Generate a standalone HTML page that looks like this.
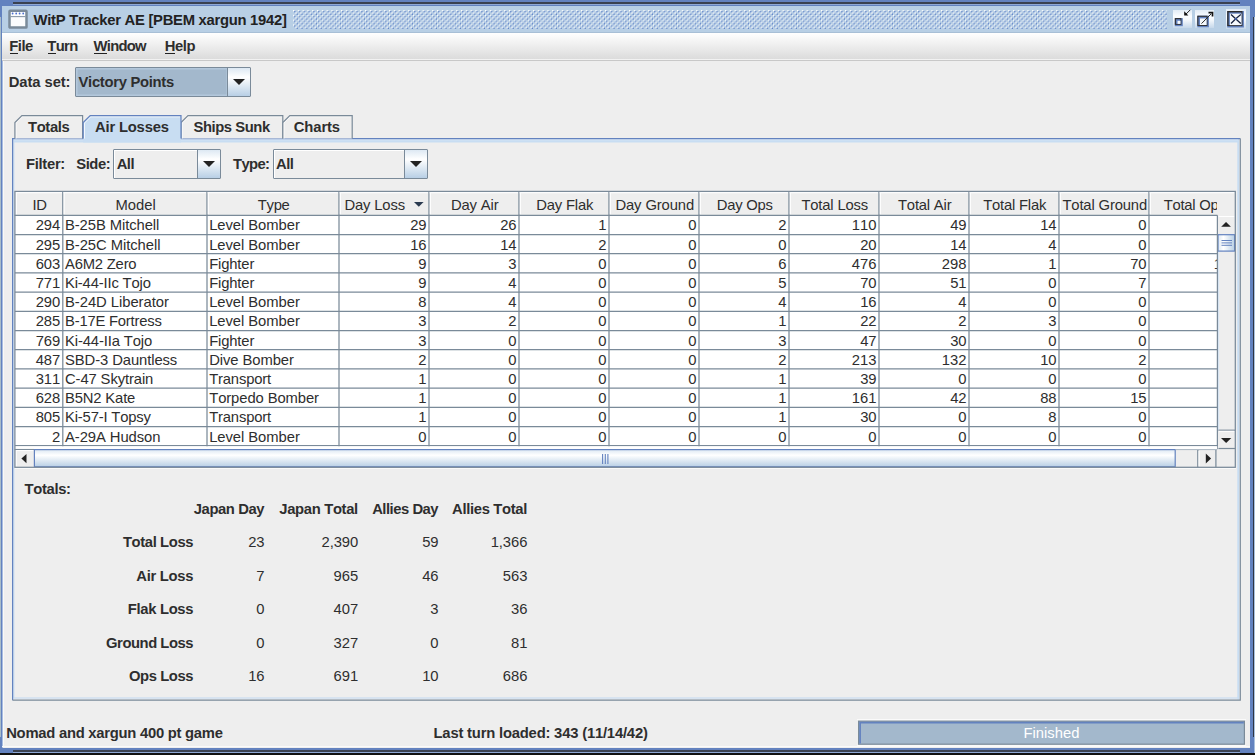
<!DOCTYPE html>
<html><head><meta charset="utf-8"><style>
html,body{margin:0;padding:0;width:1255px;height:755px;overflow:hidden;background:#6382bf}
.b{position:absolute;}
.t{position:absolute;font-family:"Liberation Sans",sans-serif;font-size:14.8px;line-height:16px;white-space:nowrap;font-kerning:none;}
</style></head><body>
<div class="b" style="left:0px;top:0px;width:1255px;height:755px;background:#6382bf"></div><div class="b" style="left:13px;top:2px;width:1227px;height:2px;background:#3a4150"></div><div class="b" style="left:13px;top:4px;width:1227px;height:1px;background:#8ea8d6"></div><div class="b" style="left:0px;top:17px;width:1px;height:720px;background:#a8bcc9"></div><div class="b" style="left:1253px;top:17px;width:1px;height:720px;background:#2f3542"></div><div class="b" style="left:1254px;top:17px;width:1px;height:738px;background:#a9c0de"></div><div class="b" style="left:13px;top:750px;width:1227px;height:2px;background:#3a4150"></div><div class="b" style="left:13px;top:752px;width:1227px;height:1px;background:#8ea8d6"></div><div class="b" style="left:0px;top:753px;width:1255px;height:2px;background:#111"></div><div class="b" style="left:2px;top:6px;width:1248px;height:27px;background:#b8cfe5"></div><div class="b" style="left:2px;top:32px;width:1248px;height:1px;background:#a8bfd6"></div><svg class="b" style="left:7px;top:8px" width="23" height="23"><rect x="2.5" y="2.8" width="17" height="16.7" rx="0.6" fill="#fbfcfd" stroke="#7a8a99" stroke-width="2.5"/><line x1="3.5" y1="8.6" x2="18.5" y2="8.6" stroke="#8a98a8" stroke-width="1.1"/><circle cx="5.60" cy="5.5" r="0.9" fill="#4a6fd0"/><circle cx="9.20" cy="5.5" r="0.9" fill="#4a6fd0"/><circle cx="12.60" cy="5.5" r="0.9" fill="#4a6fd0"/><circle cx="16.20" cy="5.5" r="0.9" fill="#4a6fd0"/></svg><div class="t" style="left:33.5px;top:12px;font-weight:bold;color:#222;letter-spacing:-0.271px;">WitP Tracker AE [PBEM xargun 1942]</div><svg class="b" style="left:292.6px;top:9.6px" width="874" height="19.2"><defs><pattern id="bp" width="4.8" height="4.8" patternUnits="userSpaceOnUse"><circle cx="0.6" cy="0.6" r="0.8" fill="#ffffff"/><circle cx="1.8" cy="1.8" r="0.75" fill="#5478c4"/><circle cx="3.0" cy="3.0" r="0.8" fill="#ffffff"/><circle cx="4.2" cy="4.2" r="0.75" fill="#5478c4"/></pattern></defs><rect width="874" height="19.2" fill="url(#bp)"/></svg><div class="b" style="left:1173px;top:10px;width:19px;height:18px;background:linear-gradient(#e2ecf6,#fbfdff 35%,#f4f8fc 55%,#c6d8ea)"></div><svg class="b" style="left:1174px;top:18px" width="9" height="9"><g transform="translate(0.80,0.10)"><rect x="0" y="0" width="8.00" height="8.10" fill="#6382bf"/><rect x="0" y="0" width="6.60" height="6.70" fill="#2c2c2c"/><rect x="1.1" y="1.1" width="4.60" height="4.70" fill="#6382bf"/><rect x="2.7" y="2.7" width="3.00" height="3.10" fill="#f6f9fc"/></g></svg><svg class="b" style="left:1183px;top:8px" width="9" height="9"><path d="M7.3 1.8 L2.8 6.3" stroke="#222" stroke-width="1" fill="none"/><path d="M1.2 3.3 V7.5 H5.4 Z" fill="#111"/></svg><div class="b" style="left:1195px;top:10px;width:19px;height:18px;background:linear-gradient(#e2ecf6,#fbfdff 35%,#f4f8fc 55%,#c6d8ea)"></div><svg class="b" style="left:1197px;top:15px" width="12" height="13"><g transform="translate(0.30,0.70)"><rect x="0" y="0" width="11.60" height="11.60" fill="#6382bf"/><rect x="0" y="0" width="10.20" height="10.20" fill="#2c2c2c"/><rect x="1.1" y="1.1" width="8.20" height="8.20" fill="#6382bf"/><rect x="2.7" y="2.7" width="6.60" height="6.60" fill="#f6f9fc"/></g></svg><svg class="b" style="left:1199px;top:10px" width="16" height="16"><path d="M2.5 13.6 L12 4" stroke="#2a2a2a" stroke-width="1" fill="none"/><path d="M9.5 2.6 H13.5 V6.6" stroke="#111" stroke-width="1.7" fill="none"/></svg><div class="b" style="left:1226px;top:9px;width:20px;height:20px;background:linear-gradient(#e2ecf6,#fbfdff 35%,#f4f8fc 55%,#c6d8ea)"></div><svg class="b" style="left:1227px;top:11px" width="17" height="17"><g transform="translate(0.20,0.00)"><rect x="0" y="0" width="16.70" height="16.50" fill="#6382bf"/><rect x="0" y="0" width="15.30" height="15.10" fill="#2c2c2c"/><rect x="1.4" y="1.4" width="12.90" height="12.70" fill="#6382bf"/><rect x="2.7" y="2.7" width="11.60" height="11.40" fill="#f6f9fc"/></g></svg><svg class="b" style="left:1227.2px;top:11px" width="17" height="17"><path d="M4 3.4 Q8.5 7.5 13.8 12.5 M13.8 3.4 Q8.5 7.5 4 12.5" stroke="#15203a" stroke-width="1.3" fill="none"/><circle cx="8.9" cy="7.9" r="0.9" fill="#4a6fd0"/></svg><div class="b" style="left:2px;top:33px;width:1248px;height:27px;background:linear-gradient(#ffffff,#f4f4f4 30%,#dcdcdc 95%)"></div><div class="b" style="left:2px;top:59px;width:1248px;height:1px;background:#f2f2f2"></div><div class="b" style="left:2px;top:60px;width:1248px;height:1px;background:#c8c8c8"></div><div class="b" style="left:2px;top:61px;width:1248px;height:687px;background:#eeeeee"></div><div class="b" style="left:2px;top:61px;width:1px;height:687px;background:#a8bce0"></div><div class="b" style="left:3px;top:61px;width:1px;height:686px;background:#f9f9f6"></div><div class="b" style="left:2px;top:746px;width:1248px;height:1px;background:#fafafa"></div><div class="t" style="left:9.3px;top:37.7px;font-weight:bold;color:#2e2e2e;letter-spacing:-0.524px;">File</div><div class="b" style="left:9.5px;top:53px;width:8px;height:1.2px;background:#222"></div><div class="t" style="left:47.2px;top:37.7px;font-weight:bold;color:#2e2e2e;letter-spacing:-0.570px;">Turn</div><div class="b" style="left:47.5px;top:53px;width:8px;height:1.2px;background:#222"></div><div class="t" style="left:93.6px;top:37.7px;font-weight:bold;color:#2e2e2e;letter-spacing:-0.752px;">Window</div><div class="b" style="left:93.8px;top:53px;width:13px;height:1.2px;background:#222"></div><div class="t" style="left:164.7px;top:37.7px;font-weight:bold;color:#2e2e2e;letter-spacing:-0.368px;">Help</div><div class="b" style="left:165px;top:53px;width:10px;height:1.2px;background:#222"></div><div class="t" style="left:8.7px;top:74px;font-weight:bold;color:#2e2e2e;letter-spacing:-0.079px;">Data set:</div><div class="b" style="left:75px;top:67px;width:176px;height:30px;border:1px solid #7a8a99;box-sizing:border-box;background:#eeeeee;border-radius:1px"></div><div class="b" style="left:76px;top:68px;width:152px;height:28px;background:#a3b8cc;box-shadow:inset 0 0 0 1.5px #b3c7db"></div><div class="b" style="left:227px;top:67px;width:1px;height:30px;background:#7a8a99"></div><div class="b" style="left:228px;top:68px;width:22px;height:28px;background:linear-gradient(#dde8f3,#ffffff 33%,#b8cfe5)"></div><svg class="b" style="left:233.0px;top:79.0px" width="12" height="6"><path d="M0 0 H12 L6 6 Z" fill="#222"/></svg><div class="t" style="left:78.5px;top:74.2px;font-weight:bold;color:#2e2e2e;letter-spacing:-0.294px;">Victory Points</div><svg class="b" style="left:0;top:0" width="1255" height="755"><rect x="13.8" y="139.2" width="1224.4" height="558.8" fill="none" stroke="#c8ddf2" stroke-width="1.2"/><rect x="13.6" y="139.2" width="1225" height="3.3" fill="#c8ddf2"/><line x1="1238.4" y1="139.2" x2="1238.4" y2="699.5" stroke="#c8ddf2" stroke-width="1.8"/><line x1="14" y1="139.7" x2="1238" y2="139.7" stroke="#e2edf8" stroke-width="1"/><polyline points="12.6,700.2 12.6,138.6 1240.3,138.6" fill="none" stroke="#6382bf" stroke-width="1.2"/><polyline points="12.6,700.2 1240.3,700.2 1240.3,138.6" fill="none" stroke="#7a8a99" stroke-width="1.2"/><polygon points="14.9,138.6 14.9,122.6 21.9,115.6 82.6,115.6 82.6,138.6" fill="#eeeeee"/><polyline points="16.1,138.6 16.1,123.1 22.4,116.8 81.8,116.8" fill="none" stroke="#ffffff" stroke-width="1" opacity="0.7"/><polyline points="14.9,138.6" fill="none"/><polyline points="14.9,138.6 14.9,122.6 21.9,115.6 82.6,115.6 82.6,138.6" fill="none" stroke="#7a8a99" stroke-width="1.2"/><polygon points="181,138.6 181,122.6 188,115.6 282.8,115.6 282.8,138.6" fill="#eeeeee"/><polyline points="182.2,138.6 182.2,123.1 188.5,116.8 282.0,116.8" fill="none" stroke="#ffffff" stroke-width="1" opacity="0.7"/><polyline points="181,138.6" fill="none"/><polyline points="181,138.6 181,122.6 188,115.6 282.8,115.6 282.8,138.6" fill="none" stroke="#7a8a99" stroke-width="1.2"/><polygon points="282.8,138.6 282.8,122.6 289.8,115.6 352.2,115.6 352.2,138.6" fill="#eeeeee"/><polyline points="284.0,138.6 284.0,123.1 290.3,116.8 351.4,116.8" fill="none" stroke="#ffffff" stroke-width="1" opacity="0.7"/><polyline points="282.8,138.6" fill="none"/><polyline points="282.8,138.6 282.8,122.6 289.8,115.6 352.2,115.6 352.2,138.6" fill="none" stroke="#7a8a99" stroke-width="1.2"/><polygon points="83.2,142.5 83.2,122.6 90.2,115.6 181,115.6 181,142.5" fill="#c8ddf2"/><polyline points="84.4,138.6 84.4,123.1 90.7,116.8 180.2,116.8" fill="none" stroke="#ffffff" stroke-width="1" opacity="0.9"/><polyline points="83.2,139" fill="none"/><polyline points="83.2,138.6 83.2,122.6 90.2,115.6 181,115.6 181,138.6" fill="none" stroke="#6382bf" stroke-width="1.2"/></svg><div class="t" style="left:28px;top:118.9px;font-weight:bold;color:#2e2e2e;letter-spacing:-0.364px;">Totals</div><div class="t" style="left:95px;top:118.9px;font-weight:bold;color:#2e2e2e;letter-spacing:-0.188px;">Air Losses</div><div class="t" style="left:193.5px;top:118.9px;font-weight:bold;color:#2e2e2e;letter-spacing:-0.439px;">Ships Sunk</div><div class="t" style="left:293.8px;top:118.9px;font-weight:bold;color:#2e2e2e;letter-spacing:-0.113px;">Charts</div><div class="t" style="left:26px;top:156px;font-weight:bold;color:#2e2e2e;letter-spacing:-0.302px;">Filter:</div><div class="t" style="left:76.2px;top:156px;font-weight:bold;color:#2e2e2e;letter-spacing:-0.397px;">Side:</div><div class="b" style="left:113.2px;top:149px;width:107.5px;height:29.5px;border:1px solid #7a8a99;box-sizing:border-box;background:#eeeeee;border-radius:1px"></div><div class="b" style="left:114.2px;top:150px;width:83.5px;height:27.5px;background:#eeeeee;box-shadow:inset 1px 1px 0 #ffffff"></div><div class="b" style="left:196.7px;top:149px;width:1px;height:29.5px;background:#7a8a99"></div><div class="b" style="left:197.7px;top:150px;width:22px;height:27.5px;background:linear-gradient(#dde8f3,#ffffff 33%,#b8cfe5)"></div><svg class="b" style="left:202.7px;top:160.75px" width="12" height="6"><path d="M0 0 H12 L6 6 Z" fill="#222"/></svg><div class="t" style="left:116.7px;top:155.95px;font-weight:bold;color:#2e2e2e;letter-spacing:-0.504px;">All</div><div class="t" style="left:233.1px;top:156px;font-weight:bold;color:#2e2e2e;letter-spacing:-0.634px;">Type:</div><div class="b" style="left:272.5px;top:149px;width:155.5px;height:29.5px;border:1px solid #7a8a99;box-sizing:border-box;background:#eeeeee;border-radius:1px"></div><div class="b" style="left:273.5px;top:150px;width:131.5px;height:27.5px;background:#eeeeee;box-shadow:inset 1px 1px 0 #ffffff"></div><div class="b" style="left:404.0px;top:149px;width:1px;height:29.5px;background:#7a8a99"></div><div class="b" style="left:405.0px;top:150px;width:22px;height:27.5px;background:linear-gradient(#dde8f3,#ffffff 33%,#b8cfe5)"></div><svg class="b" style="left:410.0px;top:160.75px" width="12" height="6"><path d="M0 0 H12 L6 6 Z" fill="#222"/></svg><div class="t" style="left:276.0px;top:155.95px;font-weight:bold;color:#2e2e2e;letter-spacing:-0.504px;">All</div><svg class="b" style="left:0;top:0" width="1255" height="755"><rect x="14.6" y="191.3" width="1220.8" height="276.2" fill="#eeeeee"/><line x1="15.6" y1="192.6" x2="62.199999999999996" y2="192.6" stroke="#ffffff" stroke-width="1.1"/><line x1="16.3" y1="192.6" x2="16.3" y2="214.6" stroke="#ffffff" stroke-width="1.1"/><line x1="62.8" y1="191.3" x2="62.8" y2="215.3" stroke="#7a8a99" stroke-width="1.3"/><line x1="63.4" y1="192.6" x2="206.4" y2="192.6" stroke="#ffffff" stroke-width="1.1"/><line x1="64.1" y1="192.6" x2="64.1" y2="214.6" stroke="#ffffff" stroke-width="1.1"/><line x1="207" y1="191.3" x2="207" y2="215.3" stroke="#7a8a99" stroke-width="1.3"/><line x1="207.6" y1="192.6" x2="338.4" y2="192.6" stroke="#ffffff" stroke-width="1.1"/><line x1="208.3" y1="192.6" x2="208.3" y2="214.6" stroke="#ffffff" stroke-width="1.1"/><line x1="339" y1="191.3" x2="339" y2="215.3" stroke="#7a8a99" stroke-width="1.3"/><line x1="339.6" y1="192.6" x2="428.4" y2="192.6" stroke="#ffffff" stroke-width="1.1"/><line x1="340.3" y1="192.6" x2="340.3" y2="214.6" stroke="#ffffff" stroke-width="1.1"/><line x1="429" y1="191.3" x2="429" y2="215.3" stroke="#7a8a99" stroke-width="1.3"/><line x1="429.6" y1="192.6" x2="518.4" y2="192.6" stroke="#ffffff" stroke-width="1.1"/><line x1="430.3" y1="192.6" x2="430.3" y2="214.6" stroke="#ffffff" stroke-width="1.1"/><line x1="519" y1="191.3" x2="519" y2="215.3" stroke="#7a8a99" stroke-width="1.3"/><line x1="519.6" y1="192.6" x2="608.4" y2="192.6" stroke="#ffffff" stroke-width="1.1"/><line x1="520.3" y1="192.6" x2="520.3" y2="214.6" stroke="#ffffff" stroke-width="1.1"/><line x1="609" y1="191.3" x2="609" y2="215.3" stroke="#7a8a99" stroke-width="1.3"/><line x1="609.6" y1="192.6" x2="698.4" y2="192.6" stroke="#ffffff" stroke-width="1.1"/><line x1="610.3" y1="192.6" x2="610.3" y2="214.6" stroke="#ffffff" stroke-width="1.1"/><line x1="699" y1="191.3" x2="699" y2="215.3" stroke="#7a8a99" stroke-width="1.3"/><line x1="699.6" y1="192.6" x2="788.4" y2="192.6" stroke="#ffffff" stroke-width="1.1"/><line x1="700.3" y1="192.6" x2="700.3" y2="214.6" stroke="#ffffff" stroke-width="1.1"/><line x1="789" y1="191.3" x2="789" y2="215.3" stroke="#7a8a99" stroke-width="1.3"/><line x1="789.6" y1="192.6" x2="878.4" y2="192.6" stroke="#ffffff" stroke-width="1.1"/><line x1="790.3" y1="192.6" x2="790.3" y2="214.6" stroke="#ffffff" stroke-width="1.1"/><line x1="879" y1="191.3" x2="879" y2="215.3" stroke="#7a8a99" stroke-width="1.3"/><line x1="879.6" y1="192.6" x2="968.4" y2="192.6" stroke="#ffffff" stroke-width="1.1"/><line x1="880.3" y1="192.6" x2="880.3" y2="214.6" stroke="#ffffff" stroke-width="1.1"/><line x1="969" y1="191.3" x2="969" y2="215.3" stroke="#7a8a99" stroke-width="1.3"/><line x1="969.6" y1="192.6" x2="1058.4" y2="192.6" stroke="#ffffff" stroke-width="1.1"/><line x1="970.3" y1="192.6" x2="970.3" y2="214.6" stroke="#ffffff" stroke-width="1.1"/><line x1="1059" y1="191.3" x2="1059" y2="215.3" stroke="#7a8a99" stroke-width="1.3"/><line x1="1059.6" y1="192.6" x2="1148.4" y2="192.6" stroke="#ffffff" stroke-width="1.1"/><line x1="1060.3" y1="192.6" x2="1060.3" y2="214.6" stroke="#ffffff" stroke-width="1.1"/><line x1="1149" y1="191.3" x2="1149" y2="215.3" stroke="#7a8a99" stroke-width="1.3"/><line x1="1149.6" y1="192.6" x2="1234.4" y2="192.6" stroke="#ffffff" stroke-width="1.1"/><line x1="1150.3" y1="192.6" x2="1150.3" y2="214.6" stroke="#ffffff" stroke-width="1.1"/><line x1="14.6" y1="215.3" x2="1217.4" y2="215.3" stroke="#7a8a99" stroke-width="1.25"/></svg><div class="b" style="left:15px;top:192px;width:1202px;height:23px;overflow:hidden"><div class="t" style="left:0.55px;width:47.8px;text-align:center;top:4.5px;font-weight:normal;color:#2e2e2e;letter-spacing:-0.500px;">ID</div><div class="t" style="left:48.59px;width:144.2px;text-align:center;top:4.5px;font-weight:normal;color:#2e2e2e;letter-spacing:-0.022px;">Model</div><div class="t" style="left:192.66px;width:132px;text-align:center;top:4.5px;font-weight:normal;color:#2e2e2e;letter-spacing:-0.276px;">Type</div><div class="t" style="left:329.4px;top:4.5px;font-weight:normal;color:#2e2e2e;letter-spacing:-0.137px;">Day Loss</div><svg class="b" style="left:398.9px;top:9.599999999999994px" width="10" height="5"><path d="M0 0 H9.6 L4.8 4.8 Z" fill="#2a3a50"/></svg><div class="t" style="left:414.72px;width:90px;text-align:center;top:4.5px;font-weight:normal;color:#2e2e2e;letter-spacing:-0.160px;">Day Air</div><div class="t" style="left:504.71px;width:90px;text-align:center;top:4.5px;font-weight:normal;color:#2e2e2e;letter-spacing:-0.174px;">Day Flak</div><div class="t" style="left:594.74px;width:90px;text-align:center;top:4.5px;font-weight:normal;color:#2e2e2e;letter-spacing:-0.120px;">Day Ground</div><div class="t" style="left:684.67px;width:90px;text-align:center;top:4.5px;font-weight:normal;color:#2e2e2e;letter-spacing:-0.253px;">Day Ops</div><div class="t" style="left:774.72px;width:90px;text-align:center;top:4.5px;font-weight:normal;color:#2e2e2e;letter-spacing:-0.168px;">Total Loss</div><div class="t" style="left:864.71px;width:90px;text-align:center;top:4.5px;font-weight:normal;color:#2e2e2e;letter-spacing:-0.189px;">Total Air</div><div class="t" style="left:954.70px;width:90px;text-align:center;top:4.5px;font-weight:normal;color:#2e2e2e;letter-spacing:-0.197px;">Total Flak</div><div class="t" style="left:1044.73px;width:90px;text-align:center;top:4.5px;font-weight:normal;color:#2e2e2e;letter-spacing:-0.148px;">Total Ground</div><div class="t" style="left:1134.67px;width:90px;text-align:center;top:4.5px;font-weight:normal;color:#2e2e2e;letter-spacing:-0.262px;">Total Ops</div></div><div class="b" style="left:15px;top:215px;width:1202px;height:234px;overflow:hidden;background:#fff"><svg class="b" style="left:0;top:0" width="1202" height="234"><g stroke="#7a8a99" stroke-width="1.25"><line x1="0" y1="0.30" x2="1202" y2="0.30"/><line x1="0" y1="19.50" x2="1202" y2="19.50"/><line x1="0" y1="38.70" x2="1202" y2="38.70"/><line x1="0" y1="57.90" x2="1202" y2="57.90"/><line x1="0" y1="77.10" x2="1202" y2="77.10"/><line x1="0" y1="96.30" x2="1202" y2="96.30"/><line x1="0" y1="115.50" x2="1202" y2="115.50"/><line x1="0" y1="134.70" x2="1202" y2="134.70"/><line x1="0" y1="153.90" x2="1202" y2="153.90"/><line x1="0" y1="173.10" x2="1202" y2="173.10"/><line x1="0" y1="192.30" x2="1202" y2="192.30"/><line x1="0" y1="211.50" x2="1202" y2="211.50"/><line x1="0" y1="230.70" x2="1202" y2="230.70"/><line x1="47.80" y1="0" x2="47.80" y2="234"/><line x1="192.00" y1="0" x2="192.00" y2="234"/><line x1="324.00" y1="0" x2="324.00" y2="234"/><line x1="414.00" y1="0" x2="414.00" y2="234"/><line x1="504.00" y1="0" x2="504.00" y2="234"/><line x1="594.00" y1="0" x2="594.00" y2="234"/><line x1="684.00" y1="0" x2="684.00" y2="234"/><line x1="774.00" y1="0" x2="774.00" y2="234"/><line x1="864.00" y1="0" x2="864.00" y2="234"/><line x1="954.00" y1="0" x2="954.00" y2="234"/><line x1="1044.00" y1="0" x2="1044.00" y2="234"/><line x1="1134.00" y1="0" x2="1134.00" y2="234"/></g></svg><div class="t" style="left:-354.73px;width:400px;text-align:right;top:2.3000000000000007px;font-weight:normal;color:#2e2e2e;letter-spacing:-0.031px;">294</div><div class="t" style="left:50.0px;top:2.3000000000000007px;font-weight:normal;color:#2e2e2e;letter-spacing:-0.087px;">B-25B Mitchell</div><div class="t" style="left:194.2px;top:2.3000000000000007px;font-weight:normal;color:#2e2e2e;letter-spacing:-0.060px;">Level Bomber</div><div class="t" style="left:11.37px;width:400px;text-align:right;top:2.3000000000000007px;font-weight:normal;color:#2e2e2e;letter-spacing:-0.131px;">29</div><div class="t" style="left:101.37px;width:400px;text-align:right;top:2.3000000000000007px;font-weight:normal;color:#2e2e2e;letter-spacing:-0.131px;">26</div><div class="t" style="left:191.07px;width:400px;text-align:right;top:2.3000000000000007px;font-weight:normal;color:#2e2e2e;letter-spacing:-0.431px;">1</div><div class="t" style="left:281.07px;width:400px;text-align:right;top:2.3000000000000007px;font-weight:normal;color:#2e2e2e;letter-spacing:-0.431px;">0</div><div class="t" style="left:371.07px;width:400px;text-align:right;top:2.3000000000000007px;font-weight:normal;color:#2e2e2e;letter-spacing:-0.431px;">2</div><div class="t" style="left:461.47px;width:400px;text-align:right;top:2.3000000000000007px;font-weight:normal;color:#2e2e2e;letter-spacing:-0.031px;">110</div><div class="t" style="left:551.37px;width:400px;text-align:right;top:2.3000000000000007px;font-weight:normal;color:#2e2e2e;letter-spacing:-0.131px;">49</div><div class="t" style="left:641.37px;width:400px;text-align:right;top:2.3000000000000007px;font-weight:normal;color:#2e2e2e;letter-spacing:-0.131px;">14</div><div class="t" style="left:731.07px;width:400px;text-align:right;top:2.3000000000000007px;font-weight:normal;color:#2e2e2e;letter-spacing:-0.431px;">0</div><div class="t" style="left:823.37px;width:400px;text-align:right;top:2.3000000000000007px;font-weight:normal;color:#2e2e2e;letter-spacing:-0.131px;">47</div><div class="t" style="left:-354.73px;width:400px;text-align:right;top:21.5px;font-weight:normal;color:#2e2e2e;letter-spacing:-0.031px;">295</div><div class="t" style="left:50.0px;top:21.5px;font-weight:normal;color:#2e2e2e;letter-spacing:-0.059px;">B-25C Mitchell</div><div class="t" style="left:194.2px;top:21.5px;font-weight:normal;color:#2e2e2e;letter-spacing:-0.060px;">Level Bomber</div><div class="t" style="left:11.37px;width:400px;text-align:right;top:21.5px;font-weight:normal;color:#2e2e2e;letter-spacing:-0.131px;">16</div><div class="t" style="left:101.37px;width:400px;text-align:right;top:21.5px;font-weight:normal;color:#2e2e2e;letter-spacing:-0.131px;">14</div><div class="t" style="left:191.07px;width:400px;text-align:right;top:21.5px;font-weight:normal;color:#2e2e2e;letter-spacing:-0.431px;">2</div><div class="t" style="left:281.07px;width:400px;text-align:right;top:21.5px;font-weight:normal;color:#2e2e2e;letter-spacing:-0.431px;">0</div><div class="t" style="left:371.07px;width:400px;text-align:right;top:21.5px;font-weight:normal;color:#2e2e2e;letter-spacing:-0.431px;">0</div><div class="t" style="left:461.37px;width:400px;text-align:right;top:21.5px;font-weight:normal;color:#2e2e2e;letter-spacing:-0.131px;">20</div><div class="t" style="left:551.37px;width:400px;text-align:right;top:21.5px;font-weight:normal;color:#2e2e2e;letter-spacing:-0.131px;">14</div><div class="t" style="left:641.07px;width:400px;text-align:right;top:21.5px;font-weight:normal;color:#2e2e2e;letter-spacing:-0.431px;">4</div><div class="t" style="left:731.07px;width:400px;text-align:right;top:21.5px;font-weight:normal;color:#2e2e2e;letter-spacing:-0.431px;">0</div><div class="t" style="left:823.07px;width:400px;text-align:right;top:21.5px;font-weight:normal;color:#2e2e2e;letter-spacing:-0.431px;">2</div><div class="t" style="left:-354.73px;width:400px;text-align:right;top:40.699999999999996px;font-weight:normal;color:#2e2e2e;letter-spacing:-0.031px;">603</div><div class="t" style="left:50.0px;top:40.699999999999996px;font-weight:normal;color:#2e2e2e;letter-spacing:-0.201px;">A6M2 Zero</div><div class="t" style="left:194.2px;top:40.699999999999996px;font-weight:normal;color:#2e2e2e;letter-spacing:-0.152px;">Fighter</div><div class="t" style="left:11.07px;width:400px;text-align:right;top:40.699999999999996px;font-weight:normal;color:#2e2e2e;letter-spacing:-0.431px;">9</div><div class="t" style="left:101.07px;width:400px;text-align:right;top:40.699999999999996px;font-weight:normal;color:#2e2e2e;letter-spacing:-0.431px;">3</div><div class="t" style="left:191.07px;width:400px;text-align:right;top:40.699999999999996px;font-weight:normal;color:#2e2e2e;letter-spacing:-0.431px;">0</div><div class="t" style="left:281.07px;width:400px;text-align:right;top:40.699999999999996px;font-weight:normal;color:#2e2e2e;letter-spacing:-0.431px;">0</div><div class="t" style="left:371.07px;width:400px;text-align:right;top:40.699999999999996px;font-weight:normal;color:#2e2e2e;letter-spacing:-0.431px;">6</div><div class="t" style="left:461.47px;width:400px;text-align:right;top:40.699999999999996px;font-weight:normal;color:#2e2e2e;letter-spacing:-0.031px;">476</div><div class="t" style="left:551.47px;width:400px;text-align:right;top:40.699999999999996px;font-weight:normal;color:#2e2e2e;letter-spacing:-0.031px;">298</div><div class="t" style="left:641.07px;width:400px;text-align:right;top:40.699999999999996px;font-weight:normal;color:#2e2e2e;letter-spacing:-0.431px;">1</div><div class="t" style="left:731.37px;width:400px;text-align:right;top:40.699999999999996px;font-weight:normal;color:#2e2e2e;letter-spacing:-0.131px;">70</div><div class="t" style="left:823.47px;width:400px;text-align:right;top:40.699999999999996px;font-weight:normal;color:#2e2e2e;letter-spacing:-0.031px;">107</div><div class="t" style="left:-354.73px;width:400px;text-align:right;top:59.89999999999999px;font-weight:normal;color:#2e2e2e;letter-spacing:-0.031px;">771</div><div class="t" style="left:50.0px;top:59.89999999999999px;font-weight:normal;color:#2e2e2e;letter-spacing:-0.158px;">Ki-44-IIc Tojo</div><div class="t" style="left:194.2px;top:59.89999999999999px;font-weight:normal;color:#2e2e2e;letter-spacing:-0.152px;">Fighter</div><div class="t" style="left:11.07px;width:400px;text-align:right;top:59.89999999999999px;font-weight:normal;color:#2e2e2e;letter-spacing:-0.431px;">9</div><div class="t" style="left:101.07px;width:400px;text-align:right;top:59.89999999999999px;font-weight:normal;color:#2e2e2e;letter-spacing:-0.431px;">4</div><div class="t" style="left:191.07px;width:400px;text-align:right;top:59.89999999999999px;font-weight:normal;color:#2e2e2e;letter-spacing:-0.431px;">0</div><div class="t" style="left:281.07px;width:400px;text-align:right;top:59.89999999999999px;font-weight:normal;color:#2e2e2e;letter-spacing:-0.431px;">0</div><div class="t" style="left:371.07px;width:400px;text-align:right;top:59.89999999999999px;font-weight:normal;color:#2e2e2e;letter-spacing:-0.431px;">5</div><div class="t" style="left:461.37px;width:400px;text-align:right;top:59.89999999999999px;font-weight:normal;color:#2e2e2e;letter-spacing:-0.131px;">70</div><div class="t" style="left:551.37px;width:400px;text-align:right;top:59.89999999999999px;font-weight:normal;color:#2e2e2e;letter-spacing:-0.131px;">51</div><div class="t" style="left:641.07px;width:400px;text-align:right;top:59.89999999999999px;font-weight:normal;color:#2e2e2e;letter-spacing:-0.431px;">0</div><div class="t" style="left:731.07px;width:400px;text-align:right;top:59.89999999999999px;font-weight:normal;color:#2e2e2e;letter-spacing:-0.431px;">7</div><div class="t" style="left:823.37px;width:400px;text-align:right;top:59.89999999999999px;font-weight:normal;color:#2e2e2e;letter-spacing:-0.131px;">12</div><div class="t" style="left:-354.73px;width:400px;text-align:right;top:79.1px;font-weight:normal;color:#2e2e2e;letter-spacing:-0.031px;">290</div><div class="t" style="left:50.0px;top:79.1px;font-weight:normal;color:#2e2e2e;letter-spacing:-0.045px;">B-24D Liberator</div><div class="t" style="left:194.2px;top:79.1px;font-weight:normal;color:#2e2e2e;letter-spacing:-0.060px;">Level Bomber</div><div class="t" style="left:11.07px;width:400px;text-align:right;top:79.1px;font-weight:normal;color:#2e2e2e;letter-spacing:-0.431px;">8</div><div class="t" style="left:101.07px;width:400px;text-align:right;top:79.1px;font-weight:normal;color:#2e2e2e;letter-spacing:-0.431px;">4</div><div class="t" style="left:191.07px;width:400px;text-align:right;top:79.1px;font-weight:normal;color:#2e2e2e;letter-spacing:-0.431px;">0</div><div class="t" style="left:281.07px;width:400px;text-align:right;top:79.1px;font-weight:normal;color:#2e2e2e;letter-spacing:-0.431px;">0</div><div class="t" style="left:371.07px;width:400px;text-align:right;top:79.1px;font-weight:normal;color:#2e2e2e;letter-spacing:-0.431px;">4</div><div class="t" style="left:461.37px;width:400px;text-align:right;top:79.1px;font-weight:normal;color:#2e2e2e;letter-spacing:-0.131px;">16</div><div class="t" style="left:551.07px;width:400px;text-align:right;top:79.1px;font-weight:normal;color:#2e2e2e;letter-spacing:-0.431px;">4</div><div class="t" style="left:641.07px;width:400px;text-align:right;top:79.1px;font-weight:normal;color:#2e2e2e;letter-spacing:-0.431px;">0</div><div class="t" style="left:731.07px;width:400px;text-align:right;top:79.1px;font-weight:normal;color:#2e2e2e;letter-spacing:-0.431px;">0</div><div class="t" style="left:823.37px;width:400px;text-align:right;top:79.1px;font-weight:normal;color:#2e2e2e;letter-spacing:-0.131px;">12</div><div class="t" style="left:-354.73px;width:400px;text-align:right;top:98.3px;font-weight:normal;color:#2e2e2e;letter-spacing:-0.031px;">285</div><div class="t" style="left:50.0px;top:98.3px;font-weight:normal;color:#2e2e2e;letter-spacing:-0.208px;">B-17E Fortress</div><div class="t" style="left:194.2px;top:98.3px;font-weight:normal;color:#2e2e2e;letter-spacing:-0.060px;">Level Bomber</div><div class="t" style="left:11.07px;width:400px;text-align:right;top:98.3px;font-weight:normal;color:#2e2e2e;letter-spacing:-0.431px;">3</div><div class="t" style="left:101.07px;width:400px;text-align:right;top:98.3px;font-weight:normal;color:#2e2e2e;letter-spacing:-0.431px;">2</div><div class="t" style="left:191.07px;width:400px;text-align:right;top:98.3px;font-weight:normal;color:#2e2e2e;letter-spacing:-0.431px;">0</div><div class="t" style="left:281.07px;width:400px;text-align:right;top:98.3px;font-weight:normal;color:#2e2e2e;letter-spacing:-0.431px;">0</div><div class="t" style="left:371.07px;width:400px;text-align:right;top:98.3px;font-weight:normal;color:#2e2e2e;letter-spacing:-0.431px;">1</div><div class="t" style="left:461.37px;width:400px;text-align:right;top:98.3px;font-weight:normal;color:#2e2e2e;letter-spacing:-0.131px;">22</div><div class="t" style="left:551.07px;width:400px;text-align:right;top:98.3px;font-weight:normal;color:#2e2e2e;letter-spacing:-0.431px;">2</div><div class="t" style="left:641.07px;width:400px;text-align:right;top:98.3px;font-weight:normal;color:#2e2e2e;letter-spacing:-0.431px;">3</div><div class="t" style="left:731.07px;width:400px;text-align:right;top:98.3px;font-weight:normal;color:#2e2e2e;letter-spacing:-0.431px;">0</div><div class="t" style="left:823.37px;width:400px;text-align:right;top:98.3px;font-weight:normal;color:#2e2e2e;letter-spacing:-0.131px;">17</div><div class="t" style="left:-354.73px;width:400px;text-align:right;top:117.5px;font-weight:normal;color:#2e2e2e;letter-spacing:-0.031px;">769</div><div class="t" style="left:50.0px;top:117.5px;font-weight:normal;color:#2e2e2e;letter-spacing:-0.131px;">Ki-44-IIa Tojo</div><div class="t" style="left:194.2px;top:117.5px;font-weight:normal;color:#2e2e2e;letter-spacing:-0.152px;">Fighter</div><div class="t" style="left:11.07px;width:400px;text-align:right;top:117.5px;font-weight:normal;color:#2e2e2e;letter-spacing:-0.431px;">3</div><div class="t" style="left:101.07px;width:400px;text-align:right;top:117.5px;font-weight:normal;color:#2e2e2e;letter-spacing:-0.431px;">0</div><div class="t" style="left:191.07px;width:400px;text-align:right;top:117.5px;font-weight:normal;color:#2e2e2e;letter-spacing:-0.431px;">0</div><div class="t" style="left:281.07px;width:400px;text-align:right;top:117.5px;font-weight:normal;color:#2e2e2e;letter-spacing:-0.431px;">0</div><div class="t" style="left:371.07px;width:400px;text-align:right;top:117.5px;font-weight:normal;color:#2e2e2e;letter-spacing:-0.431px;">3</div><div class="t" style="left:461.37px;width:400px;text-align:right;top:117.5px;font-weight:normal;color:#2e2e2e;letter-spacing:-0.131px;">47</div><div class="t" style="left:551.37px;width:400px;text-align:right;top:117.5px;font-weight:normal;color:#2e2e2e;letter-spacing:-0.131px;">30</div><div class="t" style="left:641.07px;width:400px;text-align:right;top:117.5px;font-weight:normal;color:#2e2e2e;letter-spacing:-0.431px;">0</div><div class="t" style="left:731.07px;width:400px;text-align:right;top:117.5px;font-weight:normal;color:#2e2e2e;letter-spacing:-0.431px;">0</div><div class="t" style="left:823.37px;width:400px;text-align:right;top:117.5px;font-weight:normal;color:#2e2e2e;letter-spacing:-0.131px;">17</div><div class="t" style="left:-354.73px;width:400px;text-align:right;top:136.70000000000002px;font-weight:normal;color:#2e2e2e;letter-spacing:-0.031px;">487</div><div class="t" style="left:50.0px;top:136.70000000000002px;font-weight:normal;color:#2e2e2e;letter-spacing:-0.088px;">SBD-3 Dauntless</div><div class="t" style="left:194.2px;top:136.70000000000002px;font-weight:normal;color:#2e2e2e;letter-spacing:-0.086px;">Dive Bomber</div><div class="t" style="left:11.07px;width:400px;text-align:right;top:136.70000000000002px;font-weight:normal;color:#2e2e2e;letter-spacing:-0.431px;">2</div><div class="t" style="left:101.07px;width:400px;text-align:right;top:136.70000000000002px;font-weight:normal;color:#2e2e2e;letter-spacing:-0.431px;">0</div><div class="t" style="left:191.07px;width:400px;text-align:right;top:136.70000000000002px;font-weight:normal;color:#2e2e2e;letter-spacing:-0.431px;">0</div><div class="t" style="left:281.07px;width:400px;text-align:right;top:136.70000000000002px;font-weight:normal;color:#2e2e2e;letter-spacing:-0.431px;">0</div><div class="t" style="left:371.07px;width:400px;text-align:right;top:136.70000000000002px;font-weight:normal;color:#2e2e2e;letter-spacing:-0.431px;">2</div><div class="t" style="left:461.47px;width:400px;text-align:right;top:136.70000000000002px;font-weight:normal;color:#2e2e2e;letter-spacing:-0.031px;">213</div><div class="t" style="left:551.47px;width:400px;text-align:right;top:136.70000000000002px;font-weight:normal;color:#2e2e2e;letter-spacing:-0.031px;">132</div><div class="t" style="left:641.37px;width:400px;text-align:right;top:136.70000000000002px;font-weight:normal;color:#2e2e2e;letter-spacing:-0.131px;">10</div><div class="t" style="left:731.07px;width:400px;text-align:right;top:136.70000000000002px;font-weight:normal;color:#2e2e2e;letter-spacing:-0.431px;">2</div><div class="t" style="left:823.37px;width:400px;text-align:right;top:136.70000000000002px;font-weight:normal;color:#2e2e2e;letter-spacing:-0.131px;">69</div><div class="t" style="left:-354.73px;width:400px;text-align:right;top:155.9px;font-weight:normal;color:#2e2e2e;letter-spacing:-0.031px;">311</div><div class="t" style="left:50.0px;top:155.9px;font-weight:normal;color:#2e2e2e;letter-spacing:-0.112px;">C-47 Skytrain</div><div class="t" style="left:194.2px;top:155.9px;font-weight:normal;color:#2e2e2e;letter-spacing:-0.170px;">Transport</div><div class="t" style="left:11.07px;width:400px;text-align:right;top:155.9px;font-weight:normal;color:#2e2e2e;letter-spacing:-0.431px;">1</div><div class="t" style="left:101.07px;width:400px;text-align:right;top:155.9px;font-weight:normal;color:#2e2e2e;letter-spacing:-0.431px;">0</div><div class="t" style="left:191.07px;width:400px;text-align:right;top:155.9px;font-weight:normal;color:#2e2e2e;letter-spacing:-0.431px;">0</div><div class="t" style="left:281.07px;width:400px;text-align:right;top:155.9px;font-weight:normal;color:#2e2e2e;letter-spacing:-0.431px;">0</div><div class="t" style="left:371.07px;width:400px;text-align:right;top:155.9px;font-weight:normal;color:#2e2e2e;letter-spacing:-0.431px;">1</div><div class="t" style="left:461.37px;width:400px;text-align:right;top:155.9px;font-weight:normal;color:#2e2e2e;letter-spacing:-0.131px;">39</div><div class="t" style="left:551.07px;width:400px;text-align:right;top:155.9px;font-weight:normal;color:#2e2e2e;letter-spacing:-0.431px;">0</div><div class="t" style="left:641.07px;width:400px;text-align:right;top:155.9px;font-weight:normal;color:#2e2e2e;letter-spacing:-0.431px;">0</div><div class="t" style="left:731.07px;width:400px;text-align:right;top:155.9px;font-weight:normal;color:#2e2e2e;letter-spacing:-0.431px;">0</div><div class="t" style="left:823.37px;width:400px;text-align:right;top:155.9px;font-weight:normal;color:#2e2e2e;letter-spacing:-0.131px;">39</div><div class="t" style="left:-354.73px;width:400px;text-align:right;top:175.1px;font-weight:normal;color:#2e2e2e;letter-spacing:-0.031px;">628</div><div class="t" style="left:50.0px;top:175.1px;font-weight:normal;color:#2e2e2e;letter-spacing:-0.153px;">B5N2 Kate</div><div class="t" style="left:194.2px;top:175.1px;font-weight:normal;color:#2e2e2e;letter-spacing:-0.090px;">Torpedo Bomber</div><div class="t" style="left:11.07px;width:400px;text-align:right;top:175.1px;font-weight:normal;color:#2e2e2e;letter-spacing:-0.431px;">1</div><div class="t" style="left:101.07px;width:400px;text-align:right;top:175.1px;font-weight:normal;color:#2e2e2e;letter-spacing:-0.431px;">0</div><div class="t" style="left:191.07px;width:400px;text-align:right;top:175.1px;font-weight:normal;color:#2e2e2e;letter-spacing:-0.431px;">0</div><div class="t" style="left:281.07px;width:400px;text-align:right;top:175.1px;font-weight:normal;color:#2e2e2e;letter-spacing:-0.431px;">0</div><div class="t" style="left:371.07px;width:400px;text-align:right;top:175.1px;font-weight:normal;color:#2e2e2e;letter-spacing:-0.431px;">1</div><div class="t" style="left:461.47px;width:400px;text-align:right;top:175.1px;font-weight:normal;color:#2e2e2e;letter-spacing:-0.031px;">161</div><div class="t" style="left:551.37px;width:400px;text-align:right;top:175.1px;font-weight:normal;color:#2e2e2e;letter-spacing:-0.131px;">42</div><div class="t" style="left:641.37px;width:400px;text-align:right;top:175.1px;font-weight:normal;color:#2e2e2e;letter-spacing:-0.131px;">88</div><div class="t" style="left:731.37px;width:400px;text-align:right;top:175.1px;font-weight:normal;color:#2e2e2e;letter-spacing:-0.131px;">15</div><div class="t" style="left:823.37px;width:400px;text-align:right;top:175.1px;font-weight:normal;color:#2e2e2e;letter-spacing:-0.131px;">16</div><div class="t" style="left:-354.73px;width:400px;text-align:right;top:194.3px;font-weight:normal;color:#2e2e2e;letter-spacing:-0.031px;">805</div><div class="t" style="left:50.0px;top:194.3px;font-weight:normal;color:#2e2e2e;letter-spacing:-0.170px;">Ki-57-I Topsy</div><div class="t" style="left:194.2px;top:194.3px;font-weight:normal;color:#2e2e2e;letter-spacing:-0.170px;">Transport</div><div class="t" style="left:11.07px;width:400px;text-align:right;top:194.3px;font-weight:normal;color:#2e2e2e;letter-spacing:-0.431px;">1</div><div class="t" style="left:101.07px;width:400px;text-align:right;top:194.3px;font-weight:normal;color:#2e2e2e;letter-spacing:-0.431px;">0</div><div class="t" style="left:191.07px;width:400px;text-align:right;top:194.3px;font-weight:normal;color:#2e2e2e;letter-spacing:-0.431px;">0</div><div class="t" style="left:281.07px;width:400px;text-align:right;top:194.3px;font-weight:normal;color:#2e2e2e;letter-spacing:-0.431px;">0</div><div class="t" style="left:371.07px;width:400px;text-align:right;top:194.3px;font-weight:normal;color:#2e2e2e;letter-spacing:-0.431px;">1</div><div class="t" style="left:461.37px;width:400px;text-align:right;top:194.3px;font-weight:normal;color:#2e2e2e;letter-spacing:-0.131px;">30</div><div class="t" style="left:551.07px;width:400px;text-align:right;top:194.3px;font-weight:normal;color:#2e2e2e;letter-spacing:-0.431px;">0</div><div class="t" style="left:641.07px;width:400px;text-align:right;top:194.3px;font-weight:normal;color:#2e2e2e;letter-spacing:-0.431px;">8</div><div class="t" style="left:731.07px;width:400px;text-align:right;top:194.3px;font-weight:normal;color:#2e2e2e;letter-spacing:-0.431px;">0</div><div class="t" style="left:823.37px;width:400px;text-align:right;top:194.3px;font-weight:normal;color:#2e2e2e;letter-spacing:-0.131px;">22</div><div class="t" style="left:-355.13px;width:400px;text-align:right;top:213.5px;font-weight:normal;color:#2e2e2e;letter-spacing:-0.431px;">2</div><div class="t" style="left:50.0px;top:213.5px;font-weight:normal;color:#2e2e2e;letter-spacing:-0.071px;">A-29A Hudson</div><div class="t" style="left:194.2px;top:213.5px;font-weight:normal;color:#2e2e2e;letter-spacing:-0.060px;">Level Bomber</div><div class="t" style="left:11.07px;width:400px;text-align:right;top:213.5px;font-weight:normal;color:#2e2e2e;letter-spacing:-0.431px;">0</div><div class="t" style="left:101.07px;width:400px;text-align:right;top:213.5px;font-weight:normal;color:#2e2e2e;letter-spacing:-0.431px;">0</div><div class="t" style="left:191.07px;width:400px;text-align:right;top:213.5px;font-weight:normal;color:#2e2e2e;letter-spacing:-0.431px;">0</div><div class="t" style="left:281.07px;width:400px;text-align:right;top:213.5px;font-weight:normal;color:#2e2e2e;letter-spacing:-0.431px;">0</div><div class="t" style="left:371.07px;width:400px;text-align:right;top:213.5px;font-weight:normal;color:#2e2e2e;letter-spacing:-0.431px;">0</div><div class="t" style="left:461.07px;width:400px;text-align:right;top:213.5px;font-weight:normal;color:#2e2e2e;letter-spacing:-0.431px;">0</div><div class="t" style="left:551.07px;width:400px;text-align:right;top:213.5px;font-weight:normal;color:#2e2e2e;letter-spacing:-0.431px;">0</div><div class="t" style="left:641.07px;width:400px;text-align:right;top:213.5px;font-weight:normal;color:#2e2e2e;letter-spacing:-0.431px;">0</div><div class="t" style="left:731.07px;width:400px;text-align:right;top:213.5px;font-weight:normal;color:#2e2e2e;letter-spacing:-0.431px;">0</div><div class="t" style="left:823.07px;width:400px;text-align:right;top:213.5px;font-weight:normal;color:#2e2e2e;letter-spacing:-0.431px;">0</div></div><svg class="b" style="left:0;top:0" width="1255" height="755"><defs><linearGradient id="gv" x1="0" y1="0" x2="0" y2="1"><stop offset="0" stop-color="#dde8f3"/><stop offset="0.33" stop-color="#ffffff"/><stop offset="1" stop-color="#b8cfe5"/></linearGradient><linearGradient id="gh" x1="0" y1="0" x2="1" y2="0"><stop offset="0" stop-color="#dde8f3"/><stop offset="0.33" stop-color="#ffffff"/><stop offset="1" stop-color="#b8cfe5"/></linearGradient></defs><rect x="1217.4" y="215.9" width="17.9" height="232.6" fill="#eeeeee"/><line x1="1218.5" y1="216.5" x2="1234.5" y2="216.5" stroke="#ffffff" stroke-width="1"/><line x1="1218.6" y1="234" x2="1218.6" y2="430" stroke="#d4e3f2" stroke-width="1"/><path d="M1221.2 226.7 H1230.9 L1226.05 222.1 Z" fill="#222"/><rect x="1218" y="234.7" width="16.6" height="16.4" fill="url(#gh)" stroke="#6382bf" stroke-width="1.2"/><line x1="1221.5" y1="240.5" x2="1232" y2="240.5" stroke="#6382bf" stroke-width="1"/><line x1="1221.5" y1="242.9" x2="1232" y2="242.9" stroke="#6382bf" stroke-width="1"/><line x1="1221.5" y1="245.3" x2="1232" y2="245.3" stroke="#6382bf" stroke-width="1"/><line x1="1218.4" y1="430.2" x2="1235.3" y2="430.2" stroke="#7a8a99" stroke-width="1.2"/><line x1="1219" y1="431.3" x2="1234.5" y2="431.3" stroke="#ffffff" stroke-width="1"/><path d="M1221 437.9 H1231.3 L1226.15 442.9 Z" fill="#222"/><line x1="1218.4" y1="448.5" x2="1235.3" y2="448.5" stroke="#7a8a99" stroke-width="1.2"/><line x1="1217.4" y1="215.3" x2="1217.4" y2="449.2" stroke="#7a8a99" stroke-width="1.25"/><rect x="15.2" y="449" width="1202" height="18.3" fill="#eeeeee"/><rect x="15.2" y="446.3" width="1202" height="2.8" fill="#ffffff"/><line x1="14.6" y1="449.5" x2="34" y2="449.5" stroke="#7a8a99" stroke-width="1.1"/><line x1="15.8" y1="450.6" x2="33.6" y2="450.6" stroke="#ffffff" stroke-width="1"/><line x1="16.2" y1="450.6" x2="16.2" y2="466.5" stroke="#ffffff" stroke-width="1"/><path d="M26.5 453.9 V463.2 L21.4 458.55 Z" fill="#222"/><rect x="34.4" y="449.6" width="1140.8" height="17.2" fill="url(#gv)" stroke="#6382bf" stroke-width="1.2"/><line x1="602.6" y1="454" x2="602.6" y2="464" stroke="#6382bf" stroke-width="1.1"/><line x1="605.3" y1="454" x2="605.3" y2="464" stroke="#6382bf" stroke-width="1.1"/><line x1="607.9" y1="454" x2="607.9" y2="464" stroke="#6382bf" stroke-width="1.1"/><line x1="1175.5" y1="449.6" x2="1217" y2="449.6" stroke="#a8b4c0" stroke-width="1"/><line x1="1197.8" y1="450" x2="1197.8" y2="467.3" stroke="#7a8a99" stroke-width="1.25"/><line x1="1199" y1="451" x2="1199" y2="466.5" stroke="#ffffff" stroke-width="1"/><path d="M1205.8 453.5 V463.4 L1211.1 458.45 Z" fill="#222"/><line x1="1215.9" y1="450" x2="1215.9" y2="467.3" stroke="#7a8a99" stroke-width="1.25"/><rect x="14.9" y="191.4" width="1220.4" height="275.9" fill="none" stroke="#7a8a99" stroke-width="1.25"/><line x1="15" y1="468.5" x2="1236" y2="468.5" stroke="#fafafa" stroke-width="1"/></svg><div class="t" style="left:24.5px;top:481.1px;font-weight:bold;color:#2e2e2e;letter-spacing:-0.330px;">Totals:</div><div class="t" style="left:-135.91px;width:400px;text-align:right;top:500.5px;font-weight:bold;color:#2e2e2e;letter-spacing:-0.410px;">Japan Day</div><div class="t" style="left:-42.13px;width:400px;text-align:right;top:500.5px;font-weight:bold;color:#2e2e2e;letter-spacing:-0.331px;">Japan Total</div><div class="t" style="left:38.13px;width:400px;text-align:right;top:500.5px;font-weight:bold;color:#2e2e2e;letter-spacing:-0.475px;">Allies Day</div><div class="t" style="left:127.07px;width:400px;text-align:right;top:500.5px;font-weight:bold;color:#2e2e2e;letter-spacing:-0.329px;">Allies Total</div><div class="t" style="left:-206.88px;width:400px;text-align:right;top:534.0px;font-weight:bold;color:#2e2e2e;letter-spacing:-0.381px;">Total Loss</div><div class="t" style="left:-135.63px;width:400px;text-align:right;top:534.0px;font-weight:normal;color:#2e2e2e;letter-spacing:-0.131px;">23</div><div class="t" style="left:-41.89px;width:400px;text-align:right;top:534.0px;font-weight:normal;color:#2e2e2e;letter-spacing:-0.087px;">2,390</div><div class="t" style="left:38.47px;width:400px;text-align:right;top:534.0px;font-weight:normal;color:#2e2e2e;letter-spacing:-0.131px;">59</div><div class="t" style="left:127.31px;width:400px;text-align:right;top:534.0px;font-weight:normal;color:#2e2e2e;letter-spacing:-0.087px;">1,366</div><div class="t" style="left:-206.78px;width:400px;text-align:right;top:567.6px;font-weight:bold;color:#2e2e2e;letter-spacing:-0.277px;">Air Loss</div><div class="t" style="left:-135.93px;width:400px;text-align:right;top:567.6px;font-weight:normal;color:#2e2e2e;letter-spacing:-0.431px;">7</div><div class="t" style="left:-41.83px;width:400px;text-align:right;top:567.6px;font-weight:normal;color:#2e2e2e;letter-spacing:-0.031px;">965</div><div class="t" style="left:38.47px;width:400px;text-align:right;top:567.6px;font-weight:normal;color:#2e2e2e;letter-spacing:-0.131px;">46</div><div class="t" style="left:127.37px;width:400px;text-align:right;top:567.6px;font-weight:normal;color:#2e2e2e;letter-spacing:-0.031px;">563</div><div class="t" style="left:-206.82px;width:400px;text-align:right;top:601.2px;font-weight:bold;color:#2e2e2e;letter-spacing:-0.319px;">Flak Loss</div><div class="t" style="left:-135.93px;width:400px;text-align:right;top:601.2px;font-weight:normal;color:#2e2e2e;letter-spacing:-0.431px;">0</div><div class="t" style="left:-41.83px;width:400px;text-align:right;top:601.2px;font-weight:normal;color:#2e2e2e;letter-spacing:-0.031px;">407</div><div class="t" style="left:38.17px;width:400px;text-align:right;top:601.2px;font-weight:normal;color:#2e2e2e;letter-spacing:-0.431px;">3</div><div class="t" style="left:127.27px;width:400px;text-align:right;top:601.2px;font-weight:normal;color:#2e2e2e;letter-spacing:-0.131px;">36</div><div class="t" style="left:-206.96px;width:400px;text-align:right;top:634.8px;font-weight:bold;color:#2e2e2e;letter-spacing:-0.463px;">Ground Loss</div><div class="t" style="left:-135.93px;width:400px;text-align:right;top:634.8px;font-weight:normal;color:#2e2e2e;letter-spacing:-0.431px;">0</div><div class="t" style="left:-41.83px;width:400px;text-align:right;top:634.8px;font-weight:normal;color:#2e2e2e;letter-spacing:-0.031px;">327</div><div class="t" style="left:38.17px;width:400px;text-align:right;top:634.8px;font-weight:normal;color:#2e2e2e;letter-spacing:-0.431px;">0</div><div class="t" style="left:127.27px;width:400px;text-align:right;top:634.8px;font-weight:normal;color:#2e2e2e;letter-spacing:-0.131px;">81</div><div class="t" style="left:-206.90px;width:400px;text-align:right;top:668.4px;font-weight:bold;color:#2e2e2e;letter-spacing:-0.405px;">Ops Loss</div><div class="t" style="left:-135.63px;width:400px;text-align:right;top:668.4px;font-weight:normal;color:#2e2e2e;letter-spacing:-0.131px;">16</div><div class="t" style="left:-41.83px;width:400px;text-align:right;top:668.4px;font-weight:normal;color:#2e2e2e;letter-spacing:-0.031px;">691</div><div class="t" style="left:38.47px;width:400px;text-align:right;top:668.4px;font-weight:normal;color:#2e2e2e;letter-spacing:-0.131px;">10</div><div class="t" style="left:127.37px;width:400px;text-align:right;top:668.4px;font-weight:normal;color:#2e2e2e;letter-spacing:-0.031px;">686</div><div class="t" style="left:6.2px;top:724.8px;font-weight:bold;color:#2e2e2e;letter-spacing:-0.254px;">Nomad and xargun 400 pt game</div><div class="t" style="left:433.5px;top:725px;font-weight:bold;color:#2e2e2e;letter-spacing:-0.195px;">Last turn loaded: 343 (11/14/42)</div><svg class="b" style="left:0;top:0" width="1255" height="755"><rect x="858.6" y="721.2" width="385.8" height="23" fill="#a3b8cc" stroke="#7a8a99" stroke-width="1.2"/><polyline points="860.1,743.6 860.1,722.7 1243.8,722.7" fill="none" stroke="#6382bf" stroke-width="1.7"/></svg><div class="b" style="left:857px;top:719.4px;width:389px;height:1px;background:#fafafa"></div><div class="b" style="left:857px;top:745px;width:389px;height:1px;background:#fafafa"></div><div class="t" style="left:857.99px;width:387px;text-align:center;top:724.9px;font-weight:normal;color:#ffffff;letter-spacing:-0.018px;">Finished</div>
</body></html>
